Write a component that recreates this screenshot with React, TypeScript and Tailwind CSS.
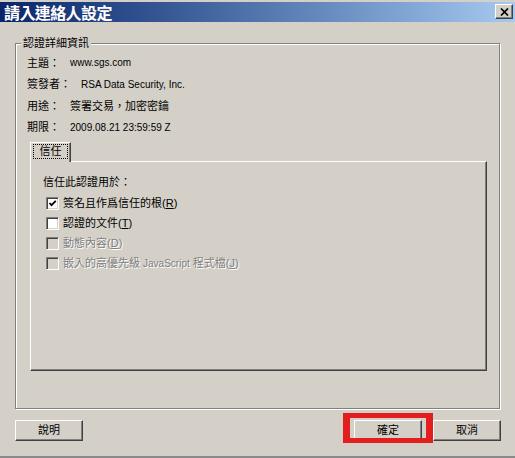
import { ReactNode } from 'react';

const face = "font-['Liberation_Sans','Noto_Sans_CJK_TC',sans-serif]";

function Check({ checked, disabled }: { checked?: boolean; disabled?: boolean }) {
  return (
    <span
      className={`relative flex h-[13px] w-[13px] shrink-0 items-center justify-center border border-t-[#808080] border-l-[#808080] border-r-white border-b-white shadow-[inset_1px_1px_0_#404040,inset_-1px_-1px_0_#d4d0c8] ${
        disabled ? 'bg-[#d4d0c8]' : 'bg-white'
      }`}
    >
      {checked && (
        <svg width="9" height="9" viewBox="0 0 9 9">
          <path d="M1.5 4 L3.5 6.2 L7.8 1.8" fill="none" stroke="#000" strokeWidth="1.8" />
        </svg>
      )}
    </span>
  );
}

function CheckRow({ children, checked, disabled }: { children: ReactNode; checked?: boolean; disabled?: boolean }) {
  return (
    <div className="flex h-[20px] items-center gap-[4px] pl-[3px]">
      <Check checked={checked} disabled={disabled} />
      <span className={disabled ? 'text-[#808080] [text-shadow:1px_1px_0_#fff]' : 'text-black'}>{children}</span>
    </div>
  );
}

function Button({ children }: { children: ReactNode }) {
  return (
    <button className="flex h-[21px] w-[68px] items-center justify-center border border-t-white border-l-white border-r-[#404040] border-b-[#404040] bg-[#d4d0c8] text-[11px] text-black shadow-[inset_-1px_-1px_0_#808080]">
      {children}
    </button>
  );
}

const info = [
  { label: '主題：', value: 'www.sgs.com', latin: true },
  { label: '簽發者：', value: 'RSA Data Security, Inc.', latin: true },
  { label: '用途：', value: '簽署交易，加密密鑰', latin: false },
  { label: '期限：', value: '2009.08.21 23:59:59 Z', latin: true },
];

export default function App() {
  return (
    <div className={`${face} flex h-[458px] w-[515px] flex-col border-b-2 border-[#8a8a8a] bg-[#d4d0c8] pt-[2px] text-[11px] text-black`}>
      {/* title bar */}
      <div className="flex h-[20px] items-start justify-between bg-gradient-to-r from-[#0a246a] to-[#a6caf0] pl-[4px] pr-[2px]">
        <span className="mt-[1px] font-['Noto_Sans_CJK_TC',sans-serif] text-[16px] font-bold leading-[19px] tracking-[-0.6px] text-white">
          請入連絡人設定
        </span>
        <button className="mt-[2px] flex h-[15px] w-[18px] items-center justify-center border border-t-white border-l-white border-r-[#404040] border-b-[#404040] bg-[#d4d0c8] shadow-[inset_-1px_-1px_0_#808080]">
          <svg width="9" height="8" viewBox="0 0 9 8">
            <path d="M1 0.5 L8 7.5 M8 0.5 L1 7.5" stroke="#000" strokeWidth="1.7" />
          </svg>
        </button>
      </div>

      <div className="px-[15px]">
        {/* group box */}
        <div className="relative mt-[21px] h-[366px] w-[485px] border border-[#808080] shadow-[1px_1px_0_#fff,inset_1px_1px_0_#fff]">
          <span className="absolute -top-[8px] left-[5px] bg-[#d4d0c8] px-[2px] leading-[14px]">認證詳細資訊</span>

          <div className="ml-[11px] mt-[8px] flex flex-col">
            {info.map((row) => (
              <div key={row.label} className="flex h-[21.5px] items-center">
                <span>{row.label}</span>
                <span className={`ml-[10px] ${row.latin ? 'text-[10px]' : ''}`}>{row.value}</span>
              </div>
            ))}
          </div>

          <div className="ml-[14px] mt-[4px] w-[457px]">
            <div className="relative z-10 -mb-px flex h-[20px] w-[41px] items-start justify-center border-l border-t border-r border-l-white border-t-white border-r-[#404040] bg-[#d4d0c8] pt-[1px] shadow-[inset_-1px_0_0_#808080]">
              <span className="flex h-[15px] w-[35px] items-center justify-center border border-dotted border-black leading-none">信任</span>
            </div>
            <div className="flex h-[210px] flex-col border border-t-white border-l-white border-r-[#404040] border-b-[#404040] pl-[12px] pt-[10px] shadow-[inset_-1px_-1px_0_#808080]">
              <div className="flex h-[20px] items-center">信任此認證用於：</div>
              <div className="mt-[1px] flex flex-col">
                <CheckRow checked>
                  簽名且作爲信任的根(<span className="underline">R</span>)
                </CheckRow>
                <CheckRow>
                  認證的文件(<span className="underline">T</span>)
                </CheckRow>
                <CheckRow disabled>
                  動態內容(<span className="underline">D</span>)
                </CheckRow>
                <CheckRow disabled>
                  嵌入的高優先級 <span className="text-[10px]">JavaScript</span> 程式檔(<span className="underline">J</span>)
                </CheckRow>
              </div>
            </div>
          </div>
        </div>

        {/* buttons */}
        <div className="mt-[11px] flex w-[486px] items-start justify-between">
          <Button>說明</Button>
          <div className="flex gap-[11px]">
            <div className="relative">
              <Button>確定</Button>
              <span className="pointer-events-none absolute -left-[11px] -top-[7px] h-[30px] w-[90px] border-x-[7px] border-y-[5px] border-[#e41e1e]" />
            </div>
            <Button>取消</Button>
          </div>
        </div>
      </div>
    </div>
  );
}
